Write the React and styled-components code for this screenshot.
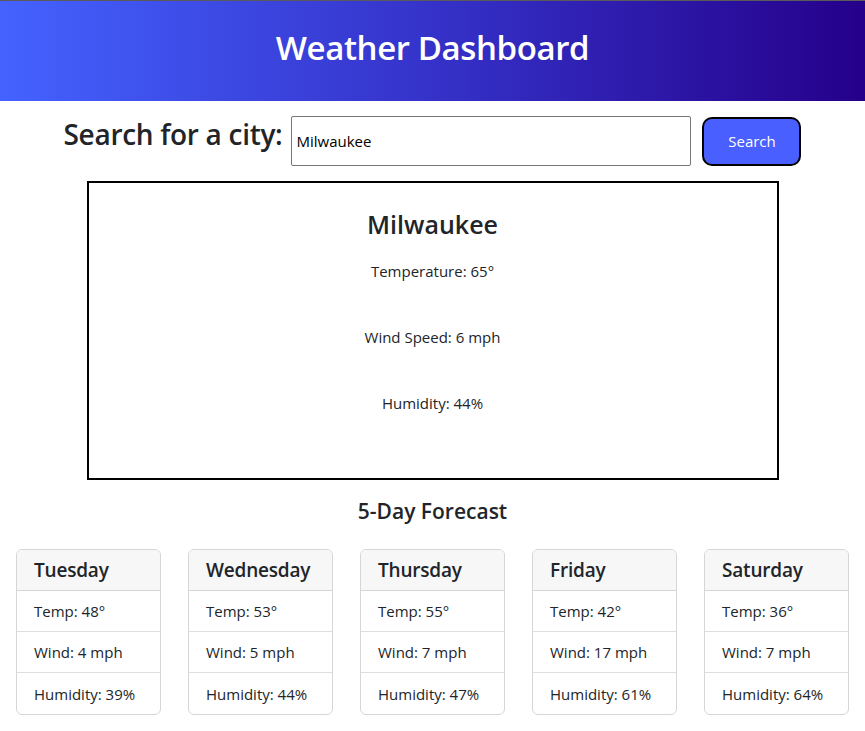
import React from "react";
import styled, { createGlobalStyle } from "styled-components";

const GlobalStyle = createGlobalStyle`
  * { box-sizing: border-box; }
  body {
    margin: 0;
    font-family: "Open Sans", "Noto Sans", sans-serif;
    color: #212529;
    background: #fff;
  }
`;

const Header = styled.header`
  height: 101px;
  border-top: 1px solid #5a5a5a;
  padding-bottom: 7px;
  background: linear-gradient(90deg, #4462ff 0%, #3532c9 50%, #25008a 100%);
  display: flex;
  align-items: center;
  justify-content: center;
`;

const Title = styled.h1`
  margin: 0;
  color: #fff;
  font-size: 33px;
  font-weight: 600;
  letter-spacing: -0.4px;
`;

const SearchRow = styled.form`
  display: flex;
  align-items: center;
  justify-content: center;
  margin-top: 15px;
  height: 50px;
`;

const SearchLabel = styled.label`
  font-size: 28px;
  font-weight: 600;
  margin-right: 9px;
  margin-top: -15px;
  letter-spacing: -0.3px;
`;

const CityInput = styled.input`
  width: 400px;
  height: 50px;
  border: 1px solid #767676;
  border-radius: 2px;
  padding: 0 4px;
  font-family: inherit;
  font-size: 15px;
  color: #000;
  outline: none;
`;

const SearchButton = styled.button`
  margin-left: 11px;
  width: 99px;
  height: 49px;
  background: #4a5fff;
  color: #fff;
  border: 2px solid #000;
  border-radius: 10px;
  font-family: inherit;
  font-size: 15px;
`;

const CurrentBox = styled.section`
  width: 692px;
  height: 299px;
  margin: 15px auto 0;
  border: 2px solid #000;
  text-align: center;
  padding-top: 26px;
`;

const CityName = styled.h2`
  margin: 0 0 20px;
  font-size: 25px;
  font-weight: 600;
  line-height: 1.2;
`;

const Stat = styled.p`
  margin: 0 0 42px;
  font-size: 15px;
  line-height: 24px;
`;

const ForecastTitle = styled.h3`
  margin: 18px 0 0;
  text-align: center;
  font-size: 21px;
  font-weight: 600;
  line-height: 26px;
`;

const CardRow = styled.div`
  display: flex;
  gap: 27px;
  padding: 0 16px;
  margin-top: 25px;
`;

const Card = styled.div`
  width: 145px;
  border: 1px solid #d6d6d6;
  border-radius: 6px;
  overflow: hidden;
`;

const CardHeader = styled.div`
  height: 41px;
  background: #f7f7f7;
  border-bottom: 1px solid #d6d6d6;
  padding: 0 17px;
  display: flex;
  align-items: center;
  font-size: 19px;
  font-weight: 600;
  letter-spacing: -0.2px;
`;

const CardItem = styled.div`
  height: 41px;
  padding: 0 17px;
  display: flex;
  align-items: center;
  font-size: 15px;
  border-bottom: ${(p) => (p.last ? "none" : "1px solid #dedede")};
`;

const forecast = [
  { day: "Tuesday", temp: 48, wind: 4, humidity: 39 },
  { day: "Wednesday", temp: 53, wind: 5, humidity: 44 },
  { day: "Thursday", temp: 55, wind: 7, humidity: 47 },
  { day: "Friday", temp: 42, wind: 17, humidity: 61 },
  { day: "Saturday", temp: 36, wind: 7, humidity: 64 },
];

const App = () => (
  <>
    <GlobalStyle />
    <Header>
      <Title>Weather Dashboard</Title>
    </Header>
    <SearchRow onSubmit={(e) => e.preventDefault()}>
      <SearchLabel htmlFor="city">Search for a city:</SearchLabel>
      <CityInput id="city" defaultValue="Milwaukee" />
      <SearchButton type="submit">Search</SearchButton>
    </SearchRow>
    <CurrentBox>
      <CityName>Milwaukee</CityName>
      <Stat>Temperature: 65°</Stat>
      <Stat>Wind Speed: 6 mph</Stat>
      <Stat>Humidity: 44%</Stat>
    </CurrentBox>
    <ForecastTitle>5-Day Forecast</ForecastTitle>
    <CardRow>
      {forecast.map((f) => (
        <Card key={f.day}>
          <CardHeader>{f.day}</CardHeader>
          <CardItem>Temp: {f.temp}°</CardItem>
          <CardItem>Wind: {f.wind} mph</CardItem>
          <CardItem last>Humidity: {f.humidity}%</CardItem>
        </Card>
      ))}
    </CardRow>
  </>
);

export default App;
